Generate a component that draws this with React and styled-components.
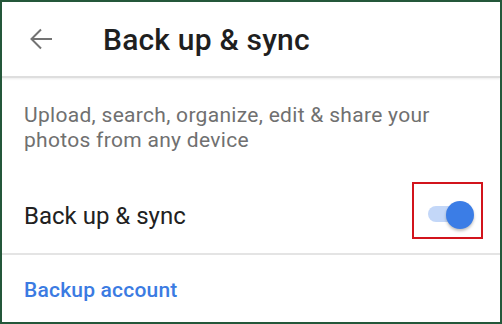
import React from "react";
import styled, { createGlobalStyle } from "styled-components";

const GlobalStyle = createGlobalStyle`
  html, body {
    margin: 0;
    padding: 0;
    background: #fff;
  }
  body {
    font-family: Roboto, "Liberation Sans", sans-serif;
  }
`;

const Frame = styled.div`
  box-sizing: border-box;
  width: 502px;
  height: 324px;
  border: 2px solid #24573a;
  background: #fff;
  display: flex;
  flex-direction: column;
  overflow: hidden;
`;

const Header = styled.div`
  height: 74px;
  display: flex;
  align-items: center;
  padding-left: 26px;
  border-bottom: 2px solid #dedede;
  box-shadow: 0 1px 2px rgba(0, 0, 0, 0.08);
`;

const BackButton = styled.div`
  width: 26px;
  height: 26px;
  display: flex;
  align-items: center;
  justify-content: center;
  margin-right: 49px;
`;

const Title = styled.h1`
  margin: 0;
  font-size: 30px;
  font-weight: 500;
  letter-spacing: 0.2px;
  color: #1f1f1f;
`;

const Description = styled.p`
  margin: 0;
  padding: 25px 22px 0;
  font-size: 21px;
  line-height: 25px;
  letter-spacing: 0.3px;
  color: #707070;
`;

const Row = styled.div`
  display: flex;
  align-items: center;
  justify-content: space-between;
  padding: 29px 17px 14px 22px;
  border-bottom: 2px solid #e4e4e4;
`;

const Label = styled.span`
  font-size: 24px;
  color: #212121;
  margin-top: 10px;
`;

const Highlight = styled.div`
  border: 2px solid #d2141c;
  padding: 22px 15px 15px 14px;
`;

const Track = styled.div`
  position: relative;
  width: 38px;
  height: 16px;
  border-radius: 8px;
  background: ${(p) => (p.on ? "#c3d7f8" : "#bdbdbd")};
`;

const Thumb = styled.div`
  position: absolute;
  top: -5px;
  ${(p) => (p.on ? "right: -8px;" : "left: -8px;")}
  width: 28px;
  height: 28px;
  border-radius: 50%;
  background: ${(p) => (p.on ? "#3b7de6" : "#f5f5f5")};
  box-shadow: 0 2px 3px rgba(0, 0, 0, 0.25);
`;

const Link = styled.a`
  display: block;
  padding: 23px 22px 0;
  font-size: 21px;
  font-weight: 500;
  letter-spacing: 0.2px;
  color: #3b7be2;
  text-decoration: none;
`;

function BackArrow() {
  return (
    <svg width="24" height="24" viewBox="0 0 24 24" fill="none">
      <path
        d="M23 12H2.5M12 2.5L2.5 12L12 21.5"
        stroke="#737373"
        strokeWidth="2"
      />
    </svg>
  );
}

function Toggle({ on }) {
  return (
    <Track on={on}>
      <Thumb on={on} />
    </Track>
  );
}

export default function App() {
  return (
    <>
      <GlobalStyle />
      <Frame>
        <Header>
          <BackButton>
            <BackArrow />
          </BackButton>
          <Title>Back up &amp; sync</Title>
        </Header>
        <Description>
          Upload, search, organize, edit &amp; share your photos from any
          device
        </Description>
        <Row>
          <Label>Back up &amp; sync</Label>
          <Highlight>
            <Toggle on />
          </Highlight>
        </Row>
        <Link href="#">Backup account</Link>
      </Frame>
    </>
  );
}
